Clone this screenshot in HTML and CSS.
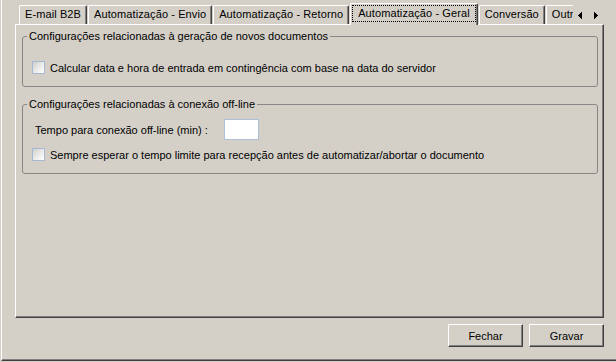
FILE: index.html
```html
<!DOCTYPE html>
<html lang="pt-BR">

<head>
    <meta charset="UTF-8">
    <title>Configurações</title>
    <link rel="stylesheet" href="styles.css">
</head>

<body>
    <div class="window">
        <!-- Abas -->
        <div class="tabbar">
            <div class="tabs">
                <div class="tab">E-mail B2B</div>
                <div class="tab">Automatização - Envio</div>
                <div class="tab">Automatização - Retorno</div>
                <div class="tab active"><span class="focus">Automatização - Geral</span></div>
                <div class="tab">Conversão</div>
                <div class="tab">Outros</div>
            </div>
            <div class="scroll">
                <svg width="31" height="25" viewBox="0 0 31 25" shape-rendering="crispEdges">
                    <polygon points="5,15.5 9,11.5 9,19.5" fill="#000" />
                    <polygon points="21,11.5 25,15.5 21,19.5" fill="#000" />
                </svg>
            </div>
        </div>

        <!-- Página da aba -->
        <div class="page">
            <fieldset class="group">
                <legend>Configurações relacionadas à geração de novos documentos</legend>
                <label class="check"><input type="checkbox">Calcular data e hora de entrada em contingência com base na data do servidor</label>
            </fieldset>

            <fieldset class="group">
                <legend>Configurações relacionadas à conexão off-line</legend>
                <div class="field">
                    <label for="tempo">Tempo para conexão off-line (min) :</label>
                    <input type="text" id="tempo">
                </div>
                <label class="check"><input type="checkbox">Sempre esperar o tempo limite para recepção antes de automatizar/abortar o documento</label>
            </fieldset>
        </div>

        <!-- Botões -->
        <div class="buttons">
            <button>Fechar</button>
            <button>Gravar</button>
        </div>
    </div>
</body>

</html>
```

FILE: styles.css
```css
/* Janela */
* {
    box-sizing: border-box;
}

body {
    margin: 0;
    background-color: #d4d0c8;
    font-family: "Liberation Sans", Arial, sans-serif;
    font-size: 11px;
    color: #000;
}

.window {
    height: 361px;
    margin-left: 1px;
    border-left: 1px solid #fff;
    border-bottom: 1px solid #404040;
    box-shadow: inset 0 -1px #808080;
}

/* Abas */
.tabbar {
    position: relative;
    z-index: 1;
    display: flex;
    width: 589px;
    height: 25px;
    margin-left: 13px;
}

.tabs {
    display: flex;
    align-items: flex-end;
    width: 558px;
    padding-left: 4px;
    overflow: hidden;
}

.tab {
    flex: none;
    height: 19px;
    margin: 0 1px 1px 0;
    padding: 2px 5px 0;
    line-height: 13px;
    letter-spacing: 0.1px;
    white-space: nowrap;
    border: 1px solid;
    border-bottom: 0;
    border-color: #fff #404040 #404040 #fff;
    border-radius: 2px 2px 0 0;
    box-shadow: inset -1px 0 #808080;
}

.tab.active {
    height: 22px;
    margin-bottom: 0;
    padding: 1px 1px 0;
    background-color: #d4d0c8;
}

.focus {
    display: block;
    padding: 1px 5px;
    border: 1px dotted #000;
}

.scroll {
    flex: none;
    width: 31px;
}

.scroll svg {
    display: block;
}

/* Página */
.page {
    width: 589px;
    height: 294px;
    margin: -1px 0 0 13px;
    padding: 5px 5px 0 6px;
    border: 1px solid;
    border-color: #fff #404040 #404040 #fff;
    box-shadow: inset -1px -1px #808080;
}

.group {
    min-width: 0;
    margin: 0;
    padding: 0 0 10px;
    border: 1px solid #878787;
    border-radius: 3px;
}

.group + .group {
    margin-top: 11px;
}

.group legend {
    margin-left: 4px;
    padding: 0 2px;
    line-height: 13px;
}

.check {
    display: flex;
    align-items: center;
    gap: 5px;
    height: 17px;
    margin-top: 16px;
    padding-left: 9px;
    white-space: nowrap;
}

.check input {
    appearance: none;
    flex: none;
    width: 13px;
    height: 13px;
    margin: 0;
    border: 1px solid #a7b8d4;
    background: linear-gradient(135deg, #cfcfcb 0%, #ececea 55%, #fff 100%);
}

.field {
    display: flex;
    align-items: center;
    margin-top: 8px;
    padding-left: 12px;
}

.field + .check {
    margin-top: 6px;
}

.field label {
    width: 189px;
}

.field input {
    width: 35px;
    height: 21px;
    padding: 0 2px;
    border: 1px solid #aebfdc;
    background-color: #fff;
    font: inherit;
}

/* Botões */
.buttons {
    display: flex;
    justify-content: flex-end;
    gap: 6px;
    margin-top: 6px;
    padding-right: 12px;
}

.buttons button {
    width: 75px;
    height: 23px;
    padding: 0;
    font: inherit;
    color: #000;
    background-color: #d4d0c8;
    border: 1px solid;
    border-color: #fff #404040 #404040 #fff;
    box-shadow: inset -1px -1px #808080;
}
```
